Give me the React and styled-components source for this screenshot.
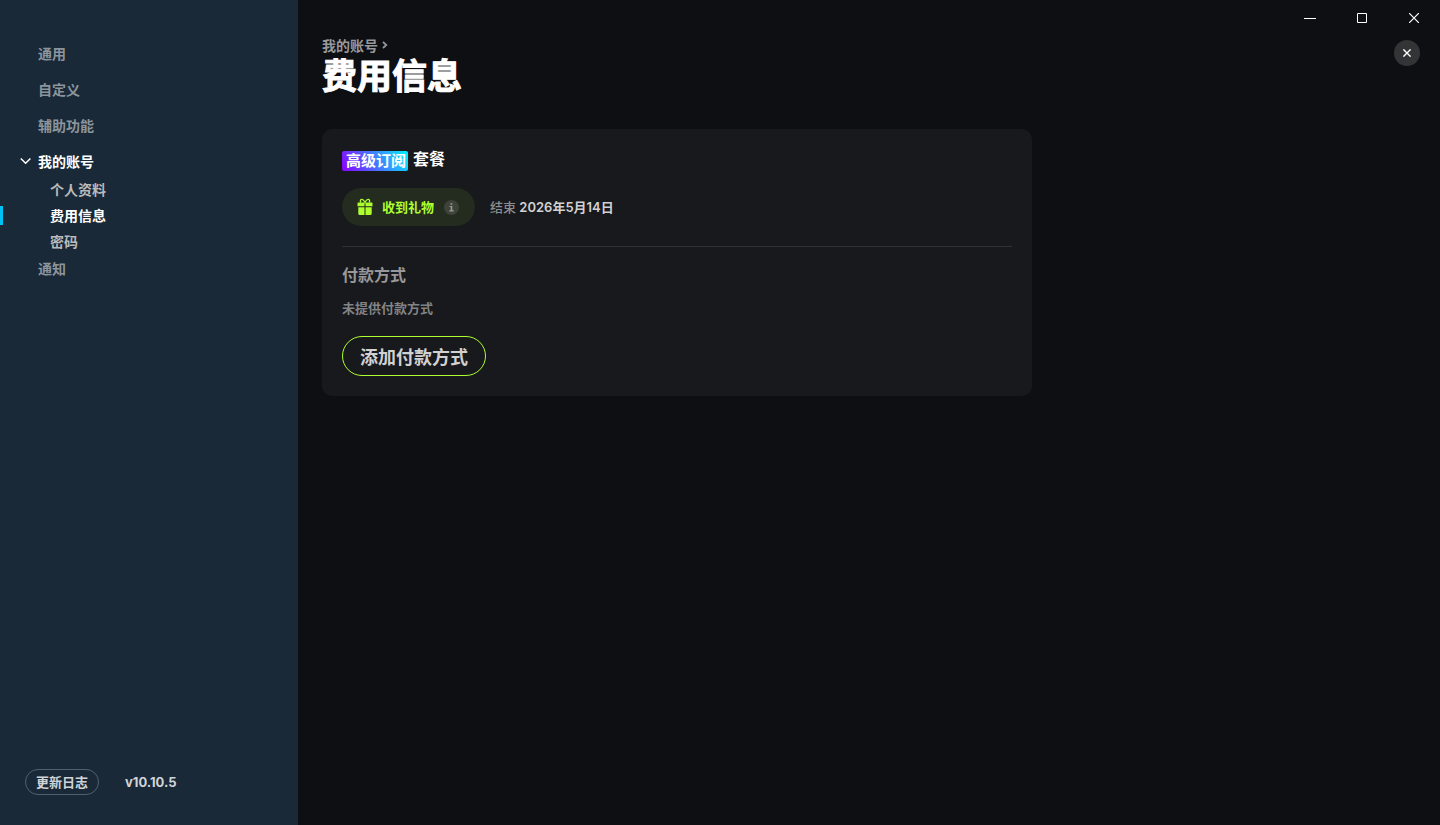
import React from 'react';
import styled, { createGlobalStyle } from 'styled-components';

const GlobalStyle = createGlobalStyle`
  *, *::before, *::after { box-sizing: border-box; }
  body {
    margin: 0;
    background: #0e0f13;
    color: #fff;
    font-family: Inter, "Noto Sans CJK SC", sans-serif;
    font-size: 14px;
    font-weight: 700;
  }
  h1, h2, h3, p, ul { margin: 0; padding: 0; }
  ul { list-style: none; }
  a { color: inherit; text-decoration: none; }
  button { margin: 0; padding: 0; border: 0; background: none; color: inherit; font: inherit; cursor: pointer; }
`;

const Shell = styled.div`
  display: flex;
  min-height: 100vh;
`;

const Sidebar = styled.aside`
  display: flex;
  flex-direction: column;
  justify-content: space-between;
  flex: 0 0 298px;
  padding: 39px 0 30px;
  background: #192938;
`;

const NavItem = styled.li`
  margin-bottom: ${({ $open }) => ($open ? 0 : 8)}px;
`;

const NavLink = styled.a`
  display: flex;
  align-items: center;
  height: 28px;
  padding-left: 20px;
  color: ${({ $open }) => ($open ? '#fff' : '#8c949c')};
`;

const ChevronSlot = styled.span`
  display: flex;
  width: 18px;
`;

const SubList = styled.ul`
  padding-top: 1px;
`;

const SubLink = styled.a`
  display: flex;
  align-items: center;
  height: 26px;
  color: ${({ $active }) => ($active ? '#fff' : '#bababc')};

  &::before {
    content: "";
    width: 3px;
    height: 19px;
    margin-right: 47px;
    background: ${({ $active }) => ($active ? '#00c3f5' : 'transparent')};
  }
`;

const SidebarFooter = styled.footer`
  display: flex;
  align-items: center;
  gap: 26px;
  padding-left: 25px;
  color: #d1d4d7;
  font-size: 13px;
`;

const ChangelogButton = styled.button`
  height: 26px;
  padding: 0 10px 2px;
  border: 1px solid #51606c;
  border-radius: 13px;
`;

const Main = styled.main`
  flex: 1;
  min-width: 0;
`;

const TitleBar = styled.div`
  display: flex;
  justify-content: flex-end;
  height: 36px;
`;

const WindowButton = styled.button`
  display: grid;
  place-items: center;
  width: 52px;
`;

const PageHeader = styled.header`
  display: flex;
  justify-content: space-between;
  align-items: flex-start;
  padding: 0 20px 0 24px;
`;

const Breadcrumb = styled.nav`
  display: flex;
  align-items: center;
  gap: 4px;
  height: 18px;
  color: #98989a;
`;

const PageTitle = styled.h1`
  font-size: 35px;
  line-height: 44px;
  -webkit-text-stroke: 1px currentColor;
`;

const CloseButton = styled.button`
  display: grid;
  place-items: center;
  width: 26px;
  height: 26px;
  margin-top: 4px;
  border-radius: 50%;
  background: #333436;
`;

const Card = styled.section`
  max-width: 710px;
  margin: 31px 24px 24px;
  padding: 20px;
  border-radius: 10px;
  background: #18191c;
`;

const PlanTitle = styled.h2`
  display: flex;
  align-items: flex-start;
  gap: 5px;
  font-size: 16px;
  line-height: 20px;
`;

const PlanBadge = styled.span`
  margin-top: 2px;
  padding: 0 2px 0 4px;
  border-radius: 2px;
  background: linear-gradient(60deg, #8c00ff, #00f0ff);
  font-size: 15px;
`;

const PlanStatus = styled.div`
  display: flex;
  align-items: center;
  gap: 15px;
  margin-top: 17px;
  padding-bottom: 20px;
  border-bottom: 1px solid #303134;
  font-size: 13px;
  line-height: 18px;
`;

const GiftPill = styled.span`
  display: flex;
  align-items: center;
  height: 38px;
  padding: 0 16px 0 15px;
  border-radius: 19px;
  background: #242b1f;
  color: #adff2f;
`;

const PillText = styled.span`
  margin: 0 10px 0 9px;
`;

const EndDate = styled.p`
  color: #d1d1d2;
  font-weight: 600;
`;

const Muted = styled.span`
  color: #8b8c8e;
  font-weight: 500;
`;

const SectionTitle = styled.h3`
  margin-top: 16px;
  color: #98989a;
  font-size: 16px;
  line-height: 24px;
`;

const EmptyNote = styled.p`
  margin-top: 12px;
  color: #828385;
  font-size: 13px;
  line-height: 18px;
`;

const AddButton = styled.button`
  height: 40px;
  margin-top: 19px;
  padding: 0 17px;
  border: 1px solid #adff2f;
  border-radius: 20px;
  color: #d1d1d2;
  font-size: 18px;
`;

const Block = styled.svg`
  display: block;
`;

const ChevronDown = () => (
  <Block width="12" height="8" viewBox="0 0 12 8" fill="none" stroke="currentColor" strokeWidth="1.5" aria-hidden="true">
    <path d="M.8 1.5 5.6 6.3 10.4 1.5" />
  </Block>
);

const ChevronRight = () => (
  <Block width="6" height="8" viewBox="0 0 6 8" fill="none" stroke="currentColor" strokeWidth="1.7" aria-hidden="true">
    <path d="M1 1 4.3 4 1 7" />
  </Block>
);

const GiftIcon = () => (
  <Block width="16" height="18" viewBox="0 0 16 18" fill="currentColor" aria-hidden="true">
    <path d="M0.5 5.2Q0.5 4.5 1.2 4.5H7.5V8.3H0.5ZM8.5 4.5h6.3q.7 0 .7.7v3.1H8.5ZM1.3 9.3H7.5V17H2.8Q1.3 17 1.3 15.5ZM8.5 9.3h6.2v6.2q0 1.5-1.5 1.5H8.5Z" />
    <path d="M4 4.5C2.6 2.8 3.6 1.2 5 1.3 6.8 1.4 7.4 3 8 4.5 8.6 3 9.2 1.4 11 1.3 12.4 1.2 13.4 2.8 12 4.5" fill="none" stroke="currentColor" strokeWidth="1.3" />
  </Block>
);

const InfoIcon = () => (
  <Block width="15" height="15" viewBox="0 0 15 15" aria-hidden="true">
    <circle cx="7.5" cy="7.5" r="7.5" fill="#3d4339" />
    <path d="M6.5 3.2h1.8v1.6H6.5ZM5.5 6h2.8v4.3h1.4v1.2H5.3v-1.2h1.4V7.1H5.5Z" fill="#999c97" />
  </Block>
);

const sections = [
  { label: '通用' },
  { label: '自定义' },
  { label: '辅助功能' },
  {
    label: '我的账号',
    children: [{ label: '个人资料' }, { label: '费用信息', active: true }, { label: '密码' }],
  },
  { label: '通知' },
];

export default function App() {
  return (
    <Shell>
      <GlobalStyle />
      <Sidebar>
        <nav aria-label="设置">
          <ul>
            {sections.map(({ label, children }) => (
              <NavItem key={label} $open={!!children}>
                <NavLink href="#" $open={!!children}>
                  <ChevronSlot>{children && <ChevronDown />}</ChevronSlot>
                  {label}
                </NavLink>
                {children && (
                  <SubList>
                    {children.map((child) => (
                      <li key={child.label}>
                        <SubLink href="#" $active={child.active} aria-current={child.active ? 'page' : undefined}>
                          {child.label}
                        </SubLink>
                      </li>
                    ))}
                  </SubList>
                )}
              </NavItem>
            ))}
          </ul>
        </nav>
        <SidebarFooter>
          <ChangelogButton type="button">更新日志</ChangelogButton>
          <span>v10.10.5</span>
        </SidebarFooter>
      </Sidebar>

      <Main>
        <TitleBar>
          <WindowButton type="button" aria-label="最小化">
            <Block width="12" height="12" viewBox="0 0 12 12" stroke="#fff">
              <path d="M0 6.5h12" />
            </Block>
          </WindowButton>
          <WindowButton type="button" aria-label="最大化">
            <Block width="10" height="10" viewBox="0 0 10 10" fill="none" stroke="#fff">
              <path d="M.5.5h9v9h-9Z" />
            </Block>
          </WindowButton>
          <WindowButton type="button" aria-label="关闭窗口">
            <Block width="10" height="10" viewBox="0 0 10 10" stroke="#fff" strokeWidth="1.2">
              <path d="M0 0 10 10M10 0 0 10" />
            </Block>
          </WindowButton>
        </TitleBar>

        <PageHeader>
          <div>
            <Breadcrumb aria-label="路径">
              <a href="#">我的账号</a>
              <ChevronRight />
            </Breadcrumb>
            <PageTitle>费用信息</PageTitle>
          </div>
          <CloseButton type="button" aria-label="关闭">
            <Block width="8" height="8" viewBox="0 0 8 8" stroke="#fff" strokeWidth="1.4">
              <path d="M.4.4 7.6 7.6M7.6.4.4 7.6" />
            </Block>
          </CloseButton>
        </PageHeader>

        <Card>
          <PlanTitle>
            <PlanBadge>高级订阅</PlanBadge>
            套餐
          </PlanTitle>
          <PlanStatus>
            <GiftPill>
              <GiftIcon />
              <PillText>收到礼物</PillText>
              <InfoIcon />
            </GiftPill>
            <EndDate>
              <Muted>结束</Muted> 2026年5月14日
            </EndDate>
          </PlanStatus>
          <SectionTitle>付款方式</SectionTitle>
          <EmptyNote>未提供付款方式</EmptyNote>
          <AddButton type="button">添加付款方式</AddButton>
        </Card>
      </Main>
    </Shell>
  );
}
